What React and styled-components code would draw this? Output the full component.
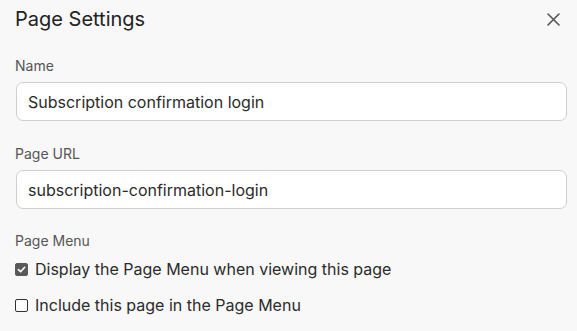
import React, { useState } from "react";
import styled, { createGlobalStyle } from "styled-components";

const GlobalStyle = createGlobalStyle`
  html, body {
    margin: 0;
    padding: 0;
    background: #f8f8f8;
  }
  body {
    font-family: Inter, "Noto Sans", sans-serif;
    color: #2b2b2b;
  }
`;

const Panel = styled.div`
  width: 577px;
  height: 331px;
  box-sizing: border-box;
  padding: 7px 12px 0 15px;
  background: #f8f8f8;
`;

const Header = styled.div`
  display: flex;
  align-items: center;
  justify-content: space-between;
  height: 24px;
  margin-bottom: 27px;
`;

const Title = styled.h1`
  margin: 0;
  font-size: 20px;
  line-height: 24px;
  font-weight: 400;
  color: #222;
`;

const Close = styled.button`
  border: none;
  background: none;
  padding: 0;
  width: 24px;
  height: 24px;
  display: flex;
  align-items: center;
  justify-content: center;
  color: #555;
  cursor: pointer;
`;

const Field = styled.div`
  display: flex;
  flex-direction: column;
  margin-bottom: ${(p) => p.gap || 25}px;
`;

const Label = styled.label`
  font-size: 14px;
  line-height: 16px;
  color: #555;
  margin-bottom: ${(p) => p.space || 8}px;
`;

const Input = styled.input`
  box-sizing: border-box;
  width: 551px;
  height: 39px;
  margin-left: 1px;
  padding: 0 11px;
  border: 1px solid #cfcfcf;
  border-radius: 7px;
  background: #fff;
  font-family: Inter, "Noto Sans", sans-serif;
  font-size: 16px;
  color: #2b2b2b;
  outline: none;
`;

const Check = styled.label`
  display: flex;
  align-items: center;
  gap: 7px;
  height: 22px;
  margin-bottom: 14px;
  font-size: 16px;
  color: #2b2b2b;
  cursor: pointer;
`;

const Box = styled.span`
  box-sizing: border-box;
  width: 13px;
  height: 13px;
  border-radius: 2px;
  border: 1px solid ${(p) => (p.checked ? "#5a5a5a" : "#333")};
  background: ${(p) => (p.checked ? "#5a5a5a" : "#fff")};
  display: flex;
  align-items: center;
  justify-content: center;
`;

function CheckItem({ checked, onToggle, children }) {
  return (
    <Check onClick={onToggle}>
      <Box checked={checked}>
        {checked && (
          <svg width="9" height="9" viewBox="0 0 10 10">
            <path
              d="M1.6 5.2 L4 7.5 L8.5 2.5"
              fill="none"
              stroke="#fff"
              strokeWidth="1.8"
              strokeLinecap="round"
              strokeLinejoin="round"
            />
          </svg>
        )}
      </Box>
      {children}
    </Check>
  );
}

export default function App() {
  const [name, setName] = useState("Subscription confirmation login");
  const [url, setUrl] = useState("subscription-confirmation-login");
  const [display, setDisplay] = useState(true);
  const [include, setInclude] = useState(false);

  return (
    <Panel>
      <GlobalStyle />
      <Header>
        <Title>Page Settings</Title>
        <Close aria-label="Close">
          <svg width="13" height="13" viewBox="0 0 13 13">
            <path
              d="M1 1 L12 12 M12 1 L1 12"
              stroke="currentColor"
              strokeWidth="1.6"
              strokeLinecap="round"
            />
          </svg>
        </Close>
      </Header>
      <Field>
        <Label>Name</Label>
        <Input value={name} onChange={(e) => setName(e.target.value)} />
      </Field>
      <Field gap={24}>
        <Label>Page URL</Label>
        <Input value={url} onChange={(e) => setUrl(e.target.value)} />
      </Field>
      <Label as="div" space={9}>
        Page Menu
      </Label>
      <CheckItem checked={display} onToggle={() => setDisplay(!display)}>
        Display the Page Menu when viewing this page
      </CheckItem>
      <CheckItem checked={include} onToggle={() => setInclude(!include)}>
        Include this page in the Page Menu
      </CheckItem>
    </Panel>
  );
}
